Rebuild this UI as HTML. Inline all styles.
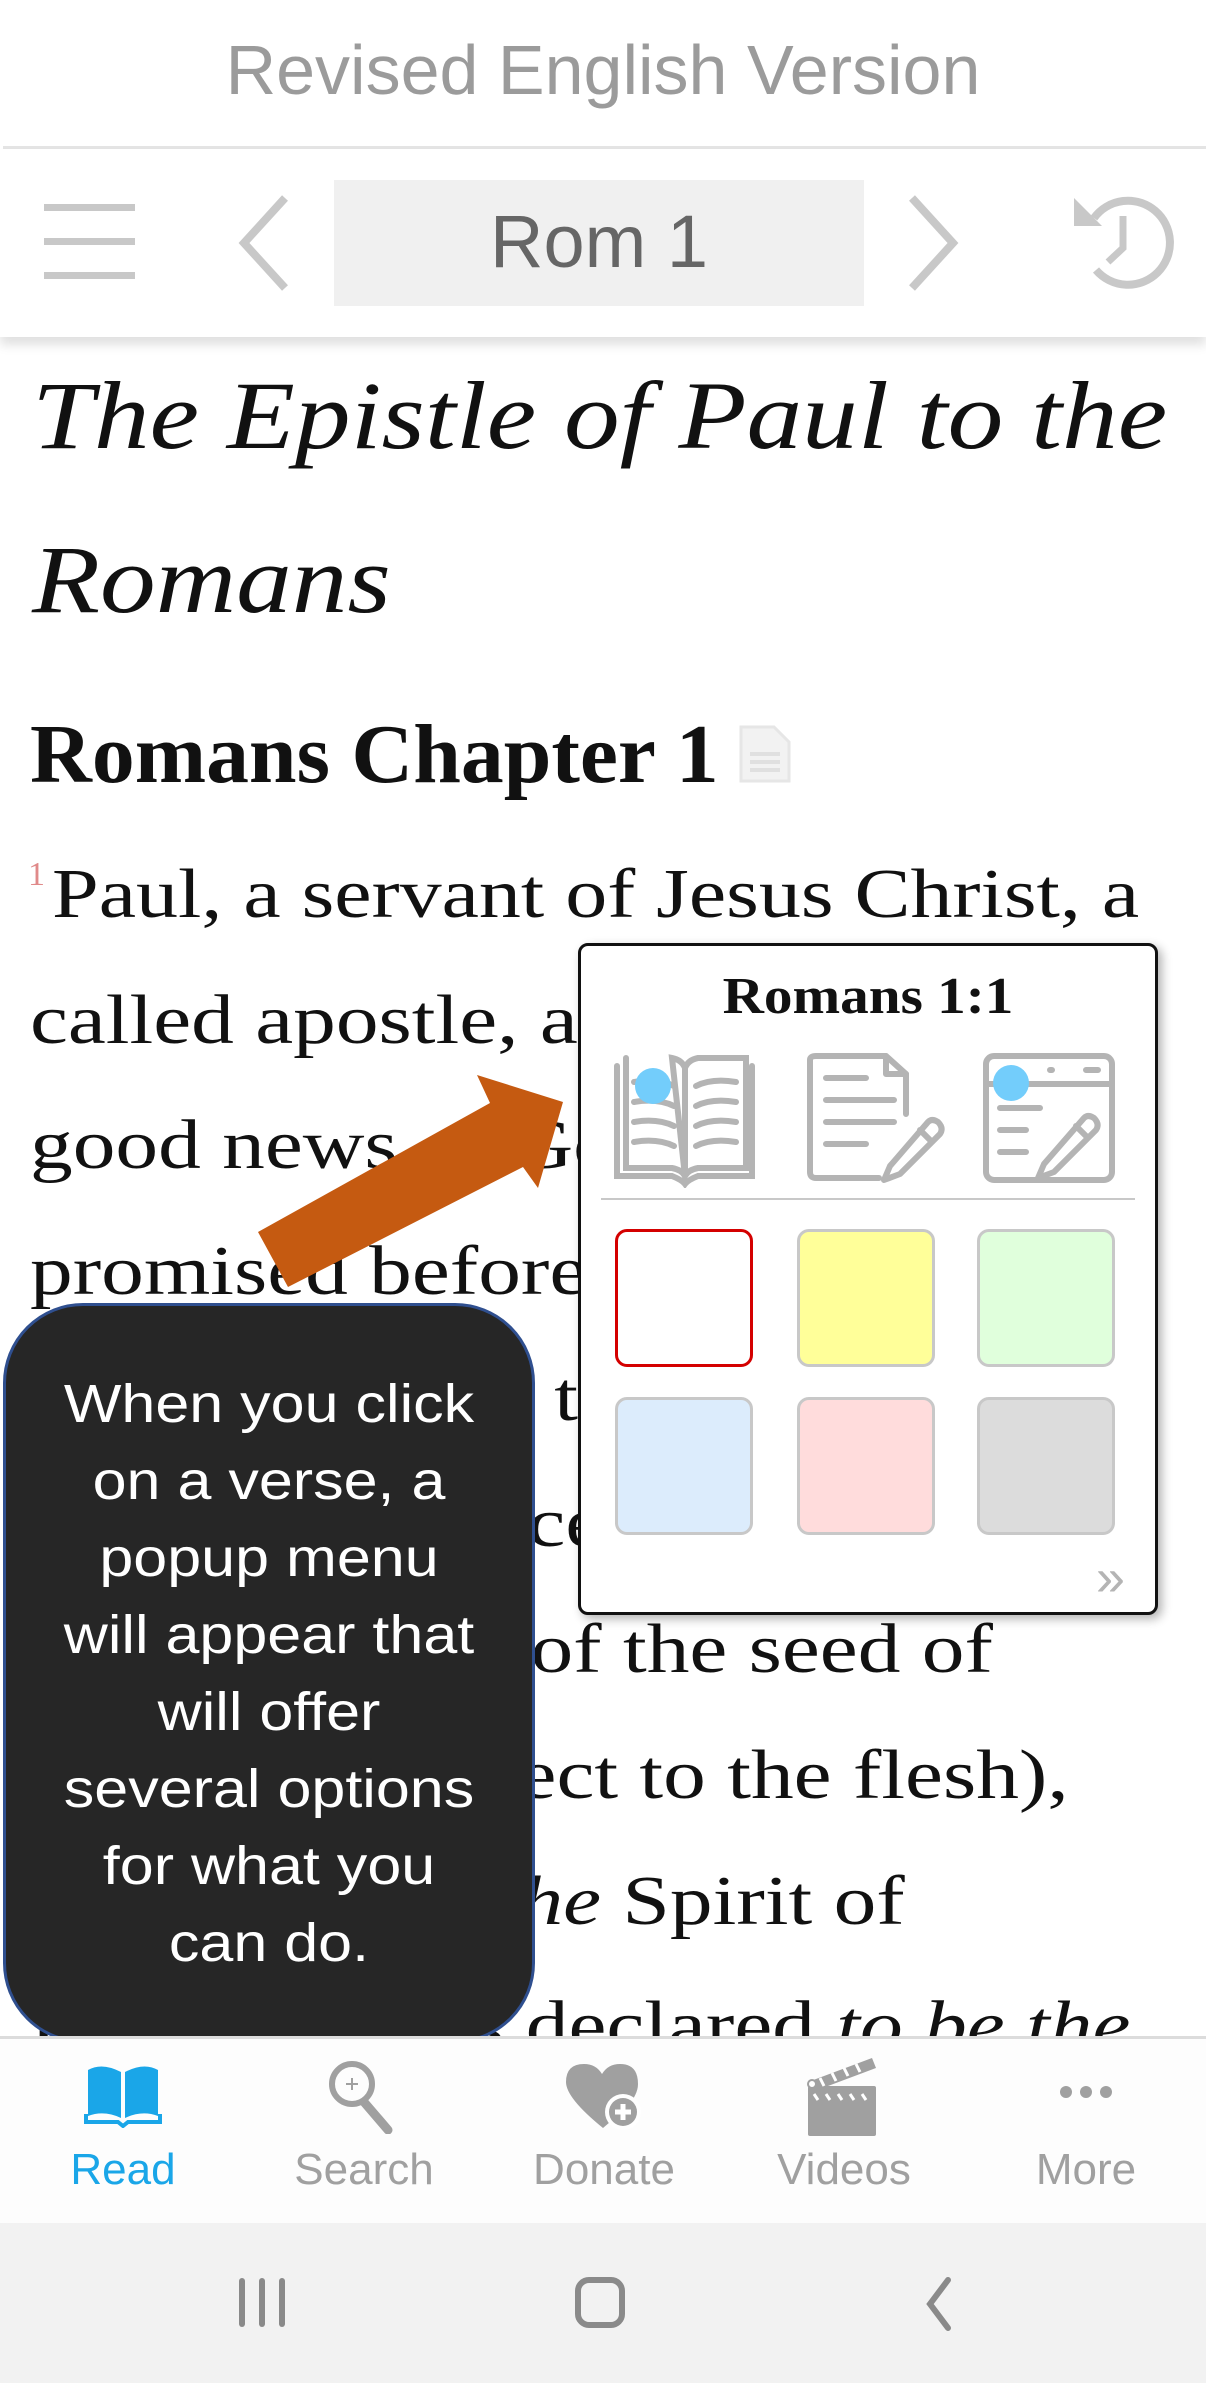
<!DOCTYPE html>
<html><head><meta charset="utf-8"><style>
*{margin:0;padding:0;box-sizing:border-box}
body{width:1206px;height:2383px;position:relative;overflow:hidden;background:#fff;font-family:"Liberation Sans",sans-serif}
.a{position:absolute;white-space:nowrap;line-height:1}
.serif{font-family:"Liberation Serif",serif;color:#111}
.body{font-size:70px;left:30px;transform:scaleX(1.22);transform-origin:0 0}
.nl{font-size:44px;color:#a0a0a0;width:240px;text-align:center}
.sw{position:absolute;width:138px;height:138px;border-radius:12px;border:3px solid #c8c8c8}
</style></head><body>
<!-- header -->
<div class="a" style="top:35px;left:0;width:1206px;text-align:center;font-size:70px;color:#9b9b9b">Revised English Version</div>
<div style="position:absolute;top:146px;left:3px;right:0;height:3px;background:#e4e4e4"></div>
<div style="position:absolute;top:149px;left:0;width:1206px;height:188px;background:#fff;box-shadow:0 8px 10px rgba(0,0,0,0.12)"></div>
<div style="position:absolute;left:44px;top:204px;width:91px;height:7px;background:#c8c8c8"></div>
<div style="position:absolute;left:44px;top:238px;width:91px;height:7px;background:#c8c8c8"></div>
<div style="position:absolute;left:44px;top:272px;width:91px;height:7px;background:#c8c8c8"></div>
<svg style="position:absolute;left:230px;top:190px" width="70" height="110"><path d="M55 8 L14 53 L55 98" fill="none" stroke="#c8c8c8" stroke-width="8"/></svg>
<svg style="position:absolute;left:900px;top:190px" width="70" height="110"><path d="M12 8 L53 53 L12 98" fill="none" stroke="#c8c8c8" stroke-width="8"/></svg>
<div style="position:absolute;left:334px;top:180px;width:530px;height:126px;background:#f0f0f0"></div>
<div class="a" style="top:205px;left:334px;width:530px;text-align:center;font-size:74px;color:#666">Rom 1</div>
<svg style="position:absolute;left:1066px;top:186px" width="110" height="112" viewBox="0 0 110 112">
<path d="M30 84 A42 42 0 1 0 28 32" fill="none" stroke="#c8c8c8" stroke-width="8"/>
<path d="M8 12 L8 40 L36 40 Z" fill="#c8c8c8"/>
<path d="M57 30 L57 62 L42 76" fill="none" stroke="#c8c8c8" stroke-width="7"/>
</svg>
<!-- content -->
<div class="a serif" style="top:368px;left:32px;font-size:96px;font-style:italic;transform:scaleX(1.16);transform-origin:0 0">The Epistle of Paul to the</div>
<div class="a serif" style="top:532px;left:32px;font-size:96px;font-style:italic;transform:scaleX(1.16);transform-origin:0 0">Romans</div>
<div class="a serif" style="top:713px;left:30px;font-size:84px;font-weight:bold;transform:scaleX(1.02);transform-origin:0 0">Romans Chapter 1</div>
<svg style="position:absolute;left:738px;top:724px" width="54" height="60"><path d="M3 3 H36 L51 18 V57 H3 Z" fill="#f2f2f2" stroke="#e6e6e6" stroke-width="3"/><path d="M12 30 H42 M12 38 H42 M12 46 H42" stroke="#e0e0e0" stroke-width="4"/></svg>
<div class="a serif" style="top:858px;left:28px;font-size:34px;color:#e08a8a">1</div>
<div class="a serif body" style="top:860px;left:52px;transform:scaleX(1.2)">Paul, a servant of Jesus Christ, a</div>
<div class="a serif body" style="top:986px">called apostle, and set apart</div>
<div class="a serif body" style="top:1111px">good news of God <sup style="font-size:34px;color:#e08a8a">2</sup>which he</div>
<div class="a serif body" style="top:1237px">promised beforehand through</div>
<div class="a serif body" style="top:1363px">his prophets in the holy</div>
<div class="a serif body" style="top:1489px">scriptures <sup style="font-size:34px;color:#e08a8a">3</sup>concerning his Son,</div>
<div class="a serif body" style="top:1615px">who was born of the seed of</div>
<div class="a serif body" style="top:1741px">David (in respect to the flesh),</div>
<div class="a serif body" style="top:1867px"><sup style="font-size:34px;color:#e08a8a">4</sup><i>and</i> who, by <i>the</i> Spirit of</div>
<div class="a serif body" style="top:1992px">Holiness, was declared <i>to be the</i></div>
<!-- arrow -->
<svg style="position:absolute;left:0;top:0" width="1206" height="1400"><polygon points="258,1232 490,1103 477,1075 563,1102 538,1188 523,1167 288,1287" fill="#c55a11"/></svg>
<!-- popup -->
<div style="position:absolute;left:578px;top:943px;width:580px;height:672px;border:3px solid #111;border-radius:10px;background:#fff;box-shadow:4px 4px 10px rgba(0,0,0,0.3)"></div>
<div class="a serif" style="top:971px;left:578px;width:580px;text-align:center;font-size:52px;font-weight:bold;transform:scaleX(1.1);transform-origin:50% 0">Romans 1:1</div>
<svg style="position:absolute;left:612px;top:1052px" width="146" height="136" viewBox="0 0 146 136">
<g fill="none" stroke="#b4b4b4" stroke-width="6" stroke-linecap="round">
<path d="M5 14 V124 H60 Q70 128 73 132 Q76 128 86 124 H140 V14"/>
<path d="M14 6 V116 H60 Q70 118 73 124 M73 124 Q76 118 86 116 H134 V6 H86 Q76 8 73 16 Q70 8 60 6 Z"/>
<path d="M73 16 V124"/>
<path d="M22 30 Q45 26 62 34 M22 50 Q45 46 62 54 M22 70 Q45 66 62 74 M22 90 Q45 86 62 94 M84 34 Q100 26 124 30 M84 54 Q100 46 124 50 M84 74 Q100 66 124 70 M84 94 Q100 86 124 90"/>
</g><circle cx="41" cy="34" r="18" fill="#73cdfb"/></svg>
<svg style="position:absolute;left:804px;top:1052px" width="146" height="136" viewBox="0 0 146 136">
<g fill="none" stroke="#b4b4b4" stroke-width="6" stroke-linecap="round" stroke-linejoin="round">
<path d="M75 126 H12 Q6 126 6 120 V8 Q6 4 12 4 H82 L102 22 V62"/><path d="M82 4 V22 H102"/>
<path d="M22 26 H62 M22 48 H90 M22 70 H90 M22 92 H62"/>
<path d="M86 114 L80 128 L96 122 L136 82 Q140 76 134 70 Q128 66 124 70 Z M116 78 L128 90"/>
</g></svg>
<svg style="position:absolute;left:982px;top:1052px" width="136" height="136" viewBox="0 0 136 136">
<g fill="none" stroke="#b4b4b4" stroke-width="6" stroke-linecap="round" stroke-linejoin="round">
<rect x="4" y="4" width="126" height="124" rx="8"/><path d="M4 32 H130 M104 18 H116 M68 18 H70"/>
<path d="M18 56 H58 M18 78 H44 M18 100 H44"/>
<path d="M62 112 L56 126 L72 120 L114 78 Q118 72 112 66 Q106 62 102 66 Z M94 74 L106 86"/>
</g><circle cx="29" cy="31" r="18" fill="#73cdfb"/></svg>
<div style="position:absolute;left:601px;top:1198px;width:534px;height:2px;background:#c8c8c8"></div>
<div class="sw" style="left:615px;top:1229px;background:#fff;border-color:#d40000"></div>
<div class="sw" style="left:797px;top:1229px;background:#ffff99"></div>
<div class="sw" style="left:977px;top:1229px;background:#e0ffdc"></div>
<div class="sw" style="left:615px;top:1397px;background:#dcecfc"></div>
<div class="sw" style="left:797px;top:1397px;background:#ffdcdc"></div>
<div class="sw" style="left:977px;top:1397px;background:#dcdcdc"></div>
<div class="a" style="top:1552px;left:1096px;font-size:52px;color:#b4b4b4">»</div>
<!-- tooltip -->
<div style="position:absolute;left:3px;top:1303px;width:532px;height:740px;background:#262626;border:3px solid #2f4f8f;border-radius:80px"></div>
<div style="position:absolute;left:3px;top:1366px;width:532px;text-align:center;color:#fff;font-size:54px;line-height:77px;transform:scaleX(1.13);transform-origin:50% 0">When you click<br>on a verse, a<br>popup menu<br>will appear that<br>will offer<br>several options<br>for what you<br>can do.</div>
<!-- bottom nav -->
<div style="position:absolute;left:0;top:2036px;width:1206px;height:187px;background:#fdfdfd;border-top:3px solid #dcdcdc"></div>
<svg style="position:absolute;left:84px;top:2064px" width="78" height="64" viewBox="0 0 78 64"><path d="M4 6 Q18 -2 37 8 V54 Q20 46 4 52 Z M41 8 Q60 -2 74 6 V52 Q58 46 41 54 Z" fill="#1aa6e8"/><path d="M2 50 V58 H34 L39 62 L44 58 H76 V50" fill="none" stroke="#1aa6e8" stroke-width="4"/></svg>
<svg style="position:absolute;left:326px;top:2058px" width="76" height="76" viewBox="0 0 76 76"><circle cx="26" cy="26" r="20" fill="none" stroke="#a0a0a0" stroke-width="6"/><path d="M26 20 V32 M20 26 H32" stroke="#a0a0a0" stroke-width="2"/><path d="M38 44 L62 72" stroke="#a0a0a0" stroke-width="9" stroke-linecap="round"/></svg>
<svg style="position:absolute;left:566px;top:2062px" width="80" height="72" viewBox="0 0 80 72"><path d="M37 66 Q0 36 0 20 Q0 2 18 2 Q30 2 36 12 Q42 2 54 2 Q72 2 72 22 Q72 34 58 48 Z" fill="#a0a0a0"/><circle cx="57" cy="50" r="18" fill="#fff"/><circle cx="57" cy="50" r="14" fill="#a0a0a0"/><path d="M57 42 V58 M49 50 H65" stroke="#fff" stroke-width="5"/></svg>
<svg style="position:absolute;left:806px;top:2056px" width="76" height="82" viewBox="0 0 76 82"><rect x="2" y="30" width="68" height="50" rx="2" fill="#a0a0a0"/><path d="M2 26 L66 2 L70 12 L6 36 Z" fill="#a0a0a0"/><path d="M14 22 L18 30 M26 17 L30 25 M38 12 L42 20 M50 8 L54 16 M8 38 L12 44 M20 38 L24 44 M32 38 L36 44 M44 38 L48 44 M56 38 L60 44" stroke="#fff" stroke-width="3"/><circle cx="6" cy="28" r="4" fill="#fff" stroke="#a0a0a0" stroke-width="2"/></svg>
<svg style="position:absolute;left:1058px;top:2082px" width="56" height="20"><circle cx="8" cy="10" r="6" fill="#a0a0a0"/><circle cx="28" cy="10" r="6" fill="#a0a0a0"/><circle cx="48" cy="10" r="6" fill="#a0a0a0"/></svg>
<div class="a nl" style="top:2148px;left:3px;color:#1aa6e8">Read</div>
<div class="a nl" style="top:2148px;left:244px">Search</div>
<div class="a nl" style="top:2148px;left:484px">Donate</div>
<div class="a nl" style="top:2148px;left:724px">Videos</div>
<div class="a nl" style="top:2148px;left:966px">More</div>
<!-- system bar -->
<div style="position:absolute;left:0;top:2223px;width:1206px;height:160px;background:#f2f2f2"></div>
<div style="position:absolute;left:239px;top:2278px;width:6px;height:49px;background:#8a8a8a;border-radius:3px"></div>
<div style="position:absolute;left:259px;top:2278px;width:6px;height:49px;background:#8a8a8a;border-radius:3px"></div>
<div style="position:absolute;left:279px;top:2278px;width:6px;height:49px;background:#8a8a8a;border-radius:3px"></div>
<div style="position:absolute;left:575px;top:2277px;width:50px;height:51px;border:6px solid #8a8a8a;border-radius:14px"></div>
<svg style="position:absolute;left:918px;top:2276px" width="40" height="56"><path d="M30 4 L12 28 L30 52" fill="none" stroke="#8a8a8a" stroke-width="6" stroke-linecap="round"/></svg>
</body></html>
